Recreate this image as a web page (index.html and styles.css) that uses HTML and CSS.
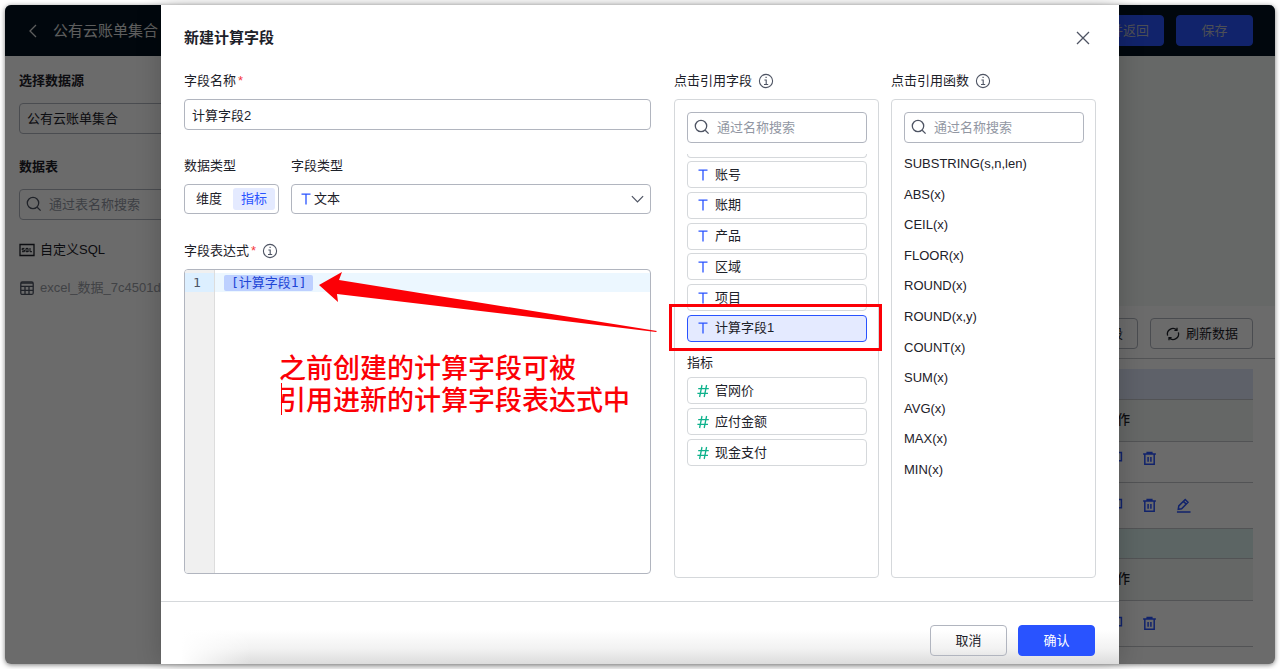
FILE: index.html
```html
<!DOCTYPE html>
<html lang="zh-CN">
<head>
<meta charset="utf-8">
<title>新建计算字段</title>
<link rel="stylesheet" href="styles.css">
</head>
<body>
<svg class="sprite" aria-hidden="true">
  <symbol id="i-search" viewBox="0 0 16 16"><circle cx="7" cy="7" r="5.7"/><path d="M11.2 11.2 14.6 14.6"/></symbol>
  <symbol id="i-info" viewBox="0 0 16 16"><circle cx="8" cy="8" r="6.6"/><path d="M6.4 7h1.8v4.4M6 11.5h4.2M7.5 4.4h1.2"/></symbol>
  <symbol id="i-text" viewBox="0 0 12 14"><path d="M1.5 2.2h9M6 2.2v10.3"/></symbol>
  <symbol id="i-hash" viewBox="0 0 12 14"><path d="M5 1 2.6 13M9.6 1 7.2 13M1.2 4.7h10.6M.4 9.3h10.6"/></symbol>
  <symbol id="i-trash" viewBox="0 0 16 16"><path d="M1.2 3.3h13.6M5.5 2.8V1.6h5v1.2M3 3.8v10.4h10V3.8M6.5 6.3v5.2M9.5 6.3v5.2"/></symbol>
  <symbol id="i-copy" viewBox="0 0 16 16"><path d="M5 4V1.5h9.3v9H11M1.7 5h8.6v9H1.7z"/></symbol>
  <symbol id="i-edit" viewBox="0 0 16 16"><path d="M3 8.4 9.8 1.6l3 3L6 11.4l-3.6.6zM8 3.6l3 3M1 15h14.5"/></symbol>
</svg>
<div class="window">
  <div class="app">
    <header class="topbar">
      <button class="back" aria-label="返回"><svg class="icon" viewBox="0 0 16 16"><path d="M11 2 5 8l6 6"/></svg></button>
      <h1 class="topbar-title">公有云账单集合</h1>
      <button class="btn primary">保存并返回</button>
      <button class="btn primary">保存</button>
    </header>
    <div class="workspace">
      <aside class="sidebar">
        <label class="side-label" for="source">选择数据源</label>
        <select class="box" id="source"><option>公有云账单集合</option></select>
        <label class="side-label second" for="table-search">数据表</label>
        <div class="search"><svg class="icon"><use href="#i-search"/></svg><input class="box" id="table-search" placeholder="通过表名称搜索"></div>
        <a class="side-item" href="#sql"><svg class="icon" viewBox="0 0 16 16"><path d="M1 2.5h14v11H1z"/><path class="thin" d="M5.4 6.4H3.2V8h2.2v1.7H3M7 6.4h2v3.3H7zM8.5 9l1 1M11 6v3.7h2"/></svg>自定义SQL</a>
        <a class="side-item muted" href="#excel"><svg class="icon" viewBox="0 0 16 16"><rect x="1.8" y="2" width="12.4" height="12.4" rx="1.5"/><path d="M2 3.2h12M1.8 6.4h12.4M1.8 10.4h12.4M6 6.4v8M10 6.4v8"/></svg>excel_数据_7c4501d</a>
      </aside>
      <main class="main">
        <div class="canvas"></div>
        <div class="toolbar">
          <button class="btn outline">新建字段</button>
          <button class="btn outline refresh"><svg class="icon" viewBox="0 0 16 16"><path d="M2.6 9.6A5.6 5.6 0 0 1 11.8 4M13.4 6.4A5.6 5.6 0 0 1 4.2 12"/><path d="M12 1.8v2.6H9.4M4 14.2v-2.6h2.6"/></svg>刷新数据</button>
        </div>
        <table class="grid">
          <tbody>
            <tr class="band blue"><td></td><td></td></tr>
            <tr class="head"><th></th><th>操作</th></tr>
            <tr class="tight"><td></td><td><div class="actions"><svg class="icon"><use href="#i-copy"/></svg><svg class="icon"><use href="#i-trash"/></svg></div></td></tr>
            <tr><td></td><td><div class="actions"><svg class="icon"><use href="#i-copy"/></svg><svg class="icon"><use href="#i-trash"/></svg><svg class="icon"><use href="#i-edit"/></svg></div></td></tr>
            <tr class="band green"><td></td><td></td></tr>
            <tr class="head"><th></th><th>操作</th></tr>
            <tr><td></td><td><div class="actions"><svg class="icon"><use href="#i-copy"/></svg><svg class="icon"><use href="#i-trash"/></svg></div></td></tr>
          </tbody>
        </table>
      </main>
    </div>
  </div>
  <div class="mask"></div>
  <section class="modal" role="dialog" aria-labelledby="dialog-title">
    <header class="modal-head">
      <h2 id="dialog-title">新建计算字段</h2>
      <button class="close" aria-label="关闭"><svg class="icon" viewBox="0 0 16 16"><path d="m2 2 12 12M14 2 2 14"/></svg></button>
    </header>
    <div class="modal-body">
      <form class="form">
        <div class="field">
          <label class="label" for="name">字段名称<span class="required">*</span></label>
          <input class="box" id="name" value="计算字段2">
        </div>
        <div class="pair">
          <div class="field">
            <span class="label" id="kind-label">数据类型</span>
            <div class="segment" role="radiogroup" aria-labelledby="kind-label">
              <label><input type="radio" name="kind"><span>维度</span></label>
              <label><input type="radio" name="kind" checked><span>指标</span></label>
            </div>
          </div>
          <div class="field grow">
            <label class="label" for="type">字段类型</label>
            <div class="type">
              <svg class="glyph text"><use href="#i-text"/></svg>
              <select class="box" id="type"><option>文本</option></select>
              <svg class="icon chevron" viewBox="0 0 16 16"><path d="m2 5 6 6 6-6"/></svg>
            </div>
          </div>
        </div>
        <div class="field fill">
          <span class="label" id="expr-label">字段表达式<span class="required">*</span><svg class="icon info"><use href="#i-info"/></svg></span>
          <div class="editor">
            <div class="gutter"><span>1</span></div>
            <div class="code" role="textbox" aria-labelledby="expr-label" contenteditable="true" spellcheck="false"><div class="line"><span class="token">[计算字段1]</span></div></div>
          </div>
        </div>
      </form>
      <div class="refs">
        <section class="ref">
          <label class="label" for="field-search">点击引用字段<svg class="icon info"><use href="#i-info"/></svg></label>
          <div class="panel">
            <div class="search"><svg class="icon"><use href="#i-search"/></svg><input class="box" id="field-search" placeholder="通过名称搜索"></div>
            <div class="scrolled"></div>
            <div class="chips dims">
              <button class="chip"><svg class="glyph text"><use href="#i-text"/></svg>账号</button>
              <button class="chip"><svg class="glyph text"><use href="#i-text"/></svg>账期</button>
              <button class="chip"><svg class="glyph text"><use href="#i-text"/></svg>产品</button>
              <button class="chip"><svg class="glyph text"><use href="#i-text"/></svg>区域</button>
              <button class="chip"><svg class="glyph text"><use href="#i-text"/></svg>项目</button>
              <button class="chip selected"><svg class="glyph text"><use href="#i-text"/></svg>计算字段1<span class="highlight"></span></button>
            </div>
            <h3 class="group">指标</h3>
            <div class="chips">
              <button class="chip"><svg class="glyph hash"><use href="#i-hash"/></svg>官网价</button>
              <button class="chip"><svg class="glyph hash"><use href="#i-hash"/></svg>应付金额</button>
              <button class="chip"><svg class="glyph hash"><use href="#i-hash"/></svg>现金支付</button>
            </div>
          </div>
        </section>
        <section class="ref">
          <label class="label" for="fn-search">点击引用函数<svg class="icon info"><use href="#i-info"/></svg></label>
          <div class="panel">
            <div class="search"><svg class="icon"><use href="#i-search"/></svg><input class="box" id="fn-search" placeholder="通过名称搜索"></div>
            <div class="functions">
              <button>SUBSTRING(s,n,len)</button>
              <button>ABS(x)</button>
              <button>CEIL(x)</button>
              <button>FLOOR(x)</button>
              <button>ROUND(x)</button>
              <button>ROUND(x,y)</button>
              <button>COUNT(x)</button>
              <button>SUM(x)</button>
              <button>AVG(x)</button>
              <button>MAX(x)</button>
              <button>MIN(x)</button>
            </div>
          </div>
        </section>
      </div>
    </div>
    <footer class="modal-foot">
      <button class="btn outline">取消</button>
      <button class="btn primary">确认</button>
    </footer>
    <svg class="arrow" viewBox="0 0 338 62" aria-hidden="true"><path d="M0 15 23 2 20 10 338 61 337 62 18 24 19 32z"/></svg>
    <p class="note">之前创建的计算字段可被<br>引用进新的计算字段表达式中</p>
  </section>
</div>
</body>
</html>
```

FILE: styles.css
```css
* { box-sizing: border-box; }
body {
  margin: 0;
  padding: 5px;
  background: #fff;
  color: #1d2129;
  font: 13px/20px "Liberation Sans", "Noto Sans CJK SC", sans-serif;
}
h1, h2, h3, p { margin: 0; }
button, input, select { font: inherit; color: inherit; }
button { padding: 0; border: 0; background: none; text-align: left; }
.sprite { display: none; }

.icon {
  flex: none;
  width: 16px;
  height: 16px;
  fill: none;
  stroke: currentColor;
  stroke-width: 1.3;
}
.thin { stroke-width: 1; }

.window {
  position: relative;
  min-height: calc(100vh - 10px);
  border-radius: 6px;
  box-shadow: 0 1px 5px rgba(0, 0, 0, .5);
}
.app { border-radius: 6px; overflow: hidden; }
.mask {
  position: absolute;
  inset: 0;
  border-radius: 6px;
  background: rgba(0, 0, 0, .58);
}

/* Shared controls */
.box {
  display: block;
  width: 100%;
  height: 31px;
  padding: 0 7px;
  border: 1px solid #b1b5bf;
  border-radius: 4px;
  background: #fff;
  appearance: none;
  outline: none;
}
.box::placeholder { color: #9297a3; opacity: 1; }
.search { position: relative; color: #4e5463; }
.search .icon { position: absolute; left: 7px; top: 7px; }
.search .box { padding-left: 29px; }
.btn {
  display: flex;
  align-items: center;
  justify-content: center;
  gap: 5px;
  min-width: 77px;
  height: 31px;
  padding: 0 14px;
  border: 1px solid #2953ff;
  border-radius: 4px;
}
.primary { background: #2953ff; color: #fff; }
.outline { border-color: #b1b5bf; background: #fff; }
.refresh { min-width: 103px; }

/* Page under the dialog */
.topbar {
  display: flex;
  align-items: center;
  gap: 12px;
  height: 51px;
  padding: 0 22px 0 20px;
  background: #03121f;
  color: #e0e0e0;
}
.topbar .primary { color: #b8bccb; }
.back { display: flex; }
.topbar-title { flex: 1; font-size: 15px; font-weight: 400; }
.workspace { display: flex; }
.sidebar { flex: none; width: 240px; padding: 15px 14px; }
.side-label { display: block; margin-bottom: 12px; font-weight: 700; }
.side-label.second { margin-top: 23px; }
.side-item {
  display: flex;
  align-items: center;
  gap: 5px;
  margin-top: 18px;
  color: inherit;
  text-decoration: none;
  white-space: nowrap;
}
.side-item:first-of-type { margin-top: 20px; }
.side-item.muted { color: #9a9da5; }
.side-item.muted .icon { color: #4e5463; }
.main { flex: 1; background: #fff; }
.canvas { height: 250px; background: #f4f8f6; }
.toolbar {
  display: flex;
  justify-content: flex-end;
  gap: 12px;
  padding: 12px 22px 9px;
  border-bottom: 1px solid #c4c6ca;
}
.grid {
  width: calc(100% - 44px);
  margin: 10px 22px 0;
  border-collapse: collapse;
  table-layout: fixed;
}
.grid td, .grid th { height: 46px; padding: 0; border-bottom: 1px solid #c4c6ca; text-align: left; }
.grid td:last-child, .grid th:last-child { width: 149px; }
.grid .band td { height: 30px; }
.grid .head th { height: 42px; background: #f1f5f3; font-weight: 500; }
.grid .tight td { height: 41px; padding-bottom: 7px; }
.grid .blue td { background: #e0e6fb; }
.grid .green td { background: #dcf1ee; }
.actions { display: flex; gap: 19px; padding-left: 4px; color: #2953ff; }
.actions .icon { width: 15px; height: 15px; stroke-width: 1.6; }

/* Dialog */
.modal {
  position: absolute;
  inset: 0 156px;
  display: flex;
  flex-direction: column;
  background: #fff;
  box-shadow: 0 0 24px rgba(0, 0, 0, .2);
}
.modal-head {
  display: flex;
  justify-content: space-between;
  padding: 23px 28px 0 23px;
}
.modal-head h2 { font-size: 15px; line-height: 20px; font-weight: 700; }
.close { display: flex; align-items: center; height: 20px; color: #4e5463; }
.modal-body {
  flex: 1;
  display: flex;
  gap: 23px;
  padding: 23px;
}
.form {
  flex: 1;
  display: flex;
  flex-direction: column;
  gap: 26px;
  padding-bottom: 4px;
}
.label { display: flex; align-items: center; margin-bottom: 8px; }
.required { margin-left: 2px; color: #f5373b; }
.info { margin-left: 6px; color: #4e5463; stroke-width: 1.1; }
.pair { display: flex; gap: 12px; }
.grow { flex: 1; }
.fill { flex: 1; display: flex; flex-direction: column; }

.segment {
  display: flex;
  gap: 3px;
  height: 30px;
  padding: 3px;
  border: 1px solid #b1b5bf;
  border-radius: 4px;
}
.segment input { position: absolute; opacity: 0; }
.segment span { display: block; padding: 0 8px; border-radius: 3px; line-height: 22px; }
.segment input:checked + span { background: #e4eaff; color: #2953ff; }

.glyph { flex: none; width: 12px; height: 14px; fill: none; stroke-width: 1.3; }
.glyph.text { stroke: #2953ff; }
.glyph.hash { stroke: #0fb28c; }
.type { position: relative; height: 31px; }
.type .glyph { position: absolute; left: 9px; top: 8px; }
.type .box { height: 30px; padding-left: 22px; }
.type .chevron { position: absolute; right: 6px; top: 7px; width: 15px; color: #4e5463; }

.editor {
  flex: 1;
  display: flex;
  border: 1px solid #b1b5bf;
  border-radius: 4px;
  overflow: hidden;
  font-family: "DejaVu Sans Mono", "Noto Sans CJK SC", monospace;
}
.gutter {
  width: 30px;
  padding-top: 3px;
  border-right: 1px solid #ddd;
  background: #f0f0f0;
  color: #4d5566;
}
.gutter span { display: block; padding-left: 8px; background: #dcefff; line-height: 19px; }
.code { flex: 1; padding-top: 3px; outline: none; }
.line { display: flex; align-items: center; height: 19px; padding-left: 9px; background: #ecf7ff; }
.token { padding: 0 7px; border-radius: 2px; background: #bdd0ff; color: #2145d6; line-height: 16px; }

.refs { display: flex; gap: 12px; }
.ref { display: flex; flex-direction: column; width: 205px; }
.panel { flex: 1; padding: 12px 11px 12px 12px; border: 1px solid #d5d8db; border-radius: 4px; }
.scrolled {
  height: 4px;
  margin: 11px 0 3px;
  border: 1px solid #d5d8db;
  border-top: 0;
  border-radius: 0 0 4px 4px;
}
.chips { display: flex; flex-direction: column; gap: 4px; }
.chips.dims { justify-content: space-between; gap: 0; height: 181px; }
.chip {
  position: relative;
  display: flex;
  align-items: center;
  gap: 6px;
  height: 27px;
  padding: 0 9px;
  border: 1px solid #d5d8db;
  border-radius: 4px;
  background: #fff;
}
.chip.selected { border-color: #2953ff; background: #e4eaff; }
.group { margin: 11px 0 4px; font-size: 13px; font-weight: 400; }
.highlight {
  position: absolute;
  inset: -12px -16px -10px -19px;
  border: 3px solid #fc0006;
}
.functions {
  display: flex;
  flex-direction: column;
  justify-content: space-between;
  height: 326px;
  margin-top: 11px;
}

.modal-foot {
  display: flex;
  justify-content: flex-end;
  gap: 11px;
  padding: 23px 24px 8px;
  border-top: 1px solid #d5d8db;
  background:
    linear-gradient(to right, #fff 20px, transparent 90px),
    linear-gradient(to bottom, #fff 45%, #f2f2f2 75%, #dcdcdc);
}
.modal-foot .outline { background: none; }

/* Annotations drawn over the dialog */
.arrow { position: absolute; left: 158px; top: 265px; width: 338px; height: 62px; fill: #fc0006; overflow: visible; }
.note {
  position: absolute;
  left: 118px;
  top: 346px;
  color: #fc0006;
  font: 500 27px/32px "Noto Sans CJK SC", sans-serif;
  white-space: nowrap;
}
.note::after {
  content: "";
  position: absolute;
  left: 2px;
  bottom: 0;
  width: 1px;
  height: 32px;
  background: #fc0006;
}
```
